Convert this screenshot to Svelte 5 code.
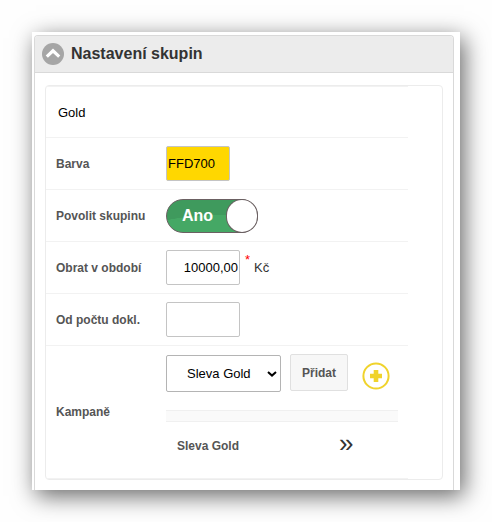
<script>
    let name = $state("Gold")
    let color = $state("FFD700")
    let enabled = $state(true)
    let turnover = $state("10000,00")
    let documents = $state("")
    let campaign = $state("Sleva Gold")
    let open = $state(true)
</script>

<main>
    <section class="panel">
        <header>
            <button class="collapse" type="button" aria-label="Sbalit" onclick={() => open = !open}>
                <svg width="22" height="22" viewBox="0 0 22 22">
                    <circle cx="11" cy="11" r="11" fill="#a6a6a6" />
                    <path d="M4.8 13.6 11 7.8l6.2 5.8" fill="none" stroke="#fff" stroke-width="3.2" />
                </svg>
            </button>
            <h2>Nastavení skupin</h2>
        </header>

        {#if open}
            <form class="group">
                <div class="row">
                    <input class="name" type="text" aria-label="Název" bind:value={name} />
                </div>
                <div class="row">
                    <label for="color">Barva</label>
                    <input id="color" class="box color" type="text" bind:value={color} style:background-color={"#" + color} />
                </div>
                <div class="row">
                    <label for="enabled">Povolit skupinu</label>
                    <span class="switch" class:off={!enabled}>
                        <input id="enabled" type="checkbox" bind:checked={enabled} />
                        <span class="state">{enabled ? "Ano" : "Ne"}</span>
                        <span class="knob"></span>
                    </span>
                </div>
                <div class="row">
                    <label for="turnover">Obrat v období</label>
                    <input id="turnover" class="box number" type="text" bind:value={turnover} />
                    <span class="required">*</span>
                    <span class="unit">Kč</span>
                </div>
                <div class="row">
                    <label for="documents">Od počtu dokl.</label>
                    <input id="documents" class="box number" type="text" bind:value={documents} />
                </div>
                <div class="row campaigns">
                    <label for="campaign">Kampaně</label>
                    <div class="content">
                        <div class="picker">
                            <span class="select">
                                <select id="campaign" bind:value={campaign}>
                                    <option>Sleva Gold</option>
                                </select>
                                <svg width="10" height="6" viewBox="0 0 10 6">
                                    <path d="M1 1l4 3.6L9 1" fill="none" stroke="#000" stroke-width="2" />
                                </svg>
                            </span>
                            <button class="add" type="button">Přidat</button>
                            <button class="plus" type="button" aria-label="Nová kampaň">
                                <svg width="28" height="28" viewBox="0 0 28 28">
                                    <circle cx="14" cy="14" r="12.6" fill="#fff" stroke="#f0d32c" stroke-width="2" />
                                    <path d="M14 8v12M8 14h12" fill="none" stroke="#f0d32c" stroke-width="4.6" />
                                </svg>
                            </button>
                        </div>
                        <div class="bar"></div>
                        <div class="item">
                            <span>Sleva Gold</span>
                            <button class="move" type="button">»</button>
                        </div>
                    </div>
                </div>
            </form>
        {/if}
    </section>
</main>

<style>
    :global(body) {
        background: #fefefe;
        font-family: "Liberation Sans", Arial, sans-serif;
        font-size: 13px;
        color: #333;
    }

    main {
        margin: 32px;
        padding: 3px 6px 0 2px;
        background: #fff;
        box-shadow: 4px 6px 22px rgba(0, 0, 0, 0.6);
    }

    .panel {
        border: 1px solid #d9d9d9;
        border-bottom: 0;
        border-radius: 4px 4px 0 0;
        padding-bottom: 10px;
    }

    header {
        display: flex;
        align-items: center;
        gap: 7px;
        height: 36px;
        padding-left: 7px;
        background: #ececec;
        border-bottom: 1px solid #d9d9d9;
        border-radius: 3px 3px 0 0;
    }

    h2 {
        margin: 0;
        font-size: 16px;
        line-height: 20px;
    }

    input,
    select,
    button {
        box-sizing: border-box;
        font-family: inherit;
        font-size: 13px;
    }

    button {
        padding: 0;
        border: 0;
        background: none;
        cursor: pointer;
    }

    button svg {
        display: block;
    }

    .group {
        margin: 12px 10px 0;
        border: 1px solid #ececec;
        border-radius: 4px;
    }

    .row {
        display: flex;
        align-items: center;
        box-sizing: border-box;
        height: 52px;
        margin-right: 34px;
        padding-left: 10px;
        border-bottom: 1px solid #f2f2f2;
    }

    .row:first-child {
        border-top: 1px solid #f2f2f2;
    }

    label {
        flex: 0 0 110px;
        font-size: 12px;
        font-weight: bold;
        color: #555;
    }

    .name {
        width: 100%;
        padding: 0 2px;
        border: 0;
        background: none;
        color: #000;
    }

    .box {
        height: 35px;
        padding: 1px;
        border: 1px solid #c4c4c4;
        border-radius: 2px;
        color: #000;
    }

    .color {
        width: 64px;
    }

    .number {
        width: 74px;
        text-align: right;
    }

    .required {
        align-self: flex-start;
        margin: 10px 4px 0 5px;
        line-height: 15px;
        color: #f00;
    }

    .switch {
        position: relative;
        display: flex;
        align-items: center;
        justify-content: space-between;
        box-sizing: border-box;
        width: 92px;
        height: 34px;
        padding-left: 15px;
        border: 1px solid #6b6062;
        border-radius: 17px;
        background: radial-gradient(ellipse 80px 18px at 55px 33px, #45a865 98%, #3f9a5d 100%);
    }

    .switch input {
        position: absolute;
        inset: 0;
        width: 100%;
        height: 100%;
        margin: 0;
        opacity: 0;
        cursor: pointer;
    }

    .switch.off {
        flex-direction: row-reverse;
        padding: 0 15px 0 0;
        background: #999;
    }

    .state {
        font-size: 16px;
        font-weight: bold;
        color: #fff;
    }

    .knob {
        box-sizing: border-box;
        width: 30px;
        height: 32px;
        border-radius: 16px;
        background: #fff;
        box-shadow: 0 0 0 1px #6b6062;
    }

    .campaigns {
        height: auto;
    }

    .content {
        flex: 1;
        margin-right: 10px;
        padding: 8px 0 12px;
    }

    .picker {
        display: flex;
        align-items: flex-start;
    }

    .select {
        position: relative;
        margin-top: 1px;
    }

    select {
        appearance: none;
        display: block;
        width: 115px;
        height: 37px;
        padding: 0 20px;
        border: 1px solid #b4b4b4;
        border-radius: 2px;
        background: #fff;
        color: #000;
    }

    .select svg {
        position: absolute;
        top: 16px;
        right: 4px;
        pointer-events: none;
    }

    .add {
        width: 58px;
        height: 37px;
        margin: 0 14px 0 9px;
        border: 1px solid #e0e0e0;
        border-radius: 2px;
        background: #f7f7f7;
        font-size: 12px;
        font-weight: bold;
        color: #555;
    }

    .plus {
        margin-top: 8px;
    }

    .bar {
        height: 10px;
        margin-top: 18px;
        border: solid #f0f0f0;
        border-width: 1px 0;
        background: #fafafa;
    }

    .item {
        display: flex;
        align-items: center;
        height: 40px;
        margin-top: 4px;
        padding-left: 11px;
        font-size: 12px;
        font-weight: bold;
        color: #555;
    }

    .item span {
        flex: 0 0 162px;
    }

    .move {
        padding-bottom: 6px;
        font-size: 26px;
        line-height: 26px;
        color: #333;
    }
</style>
